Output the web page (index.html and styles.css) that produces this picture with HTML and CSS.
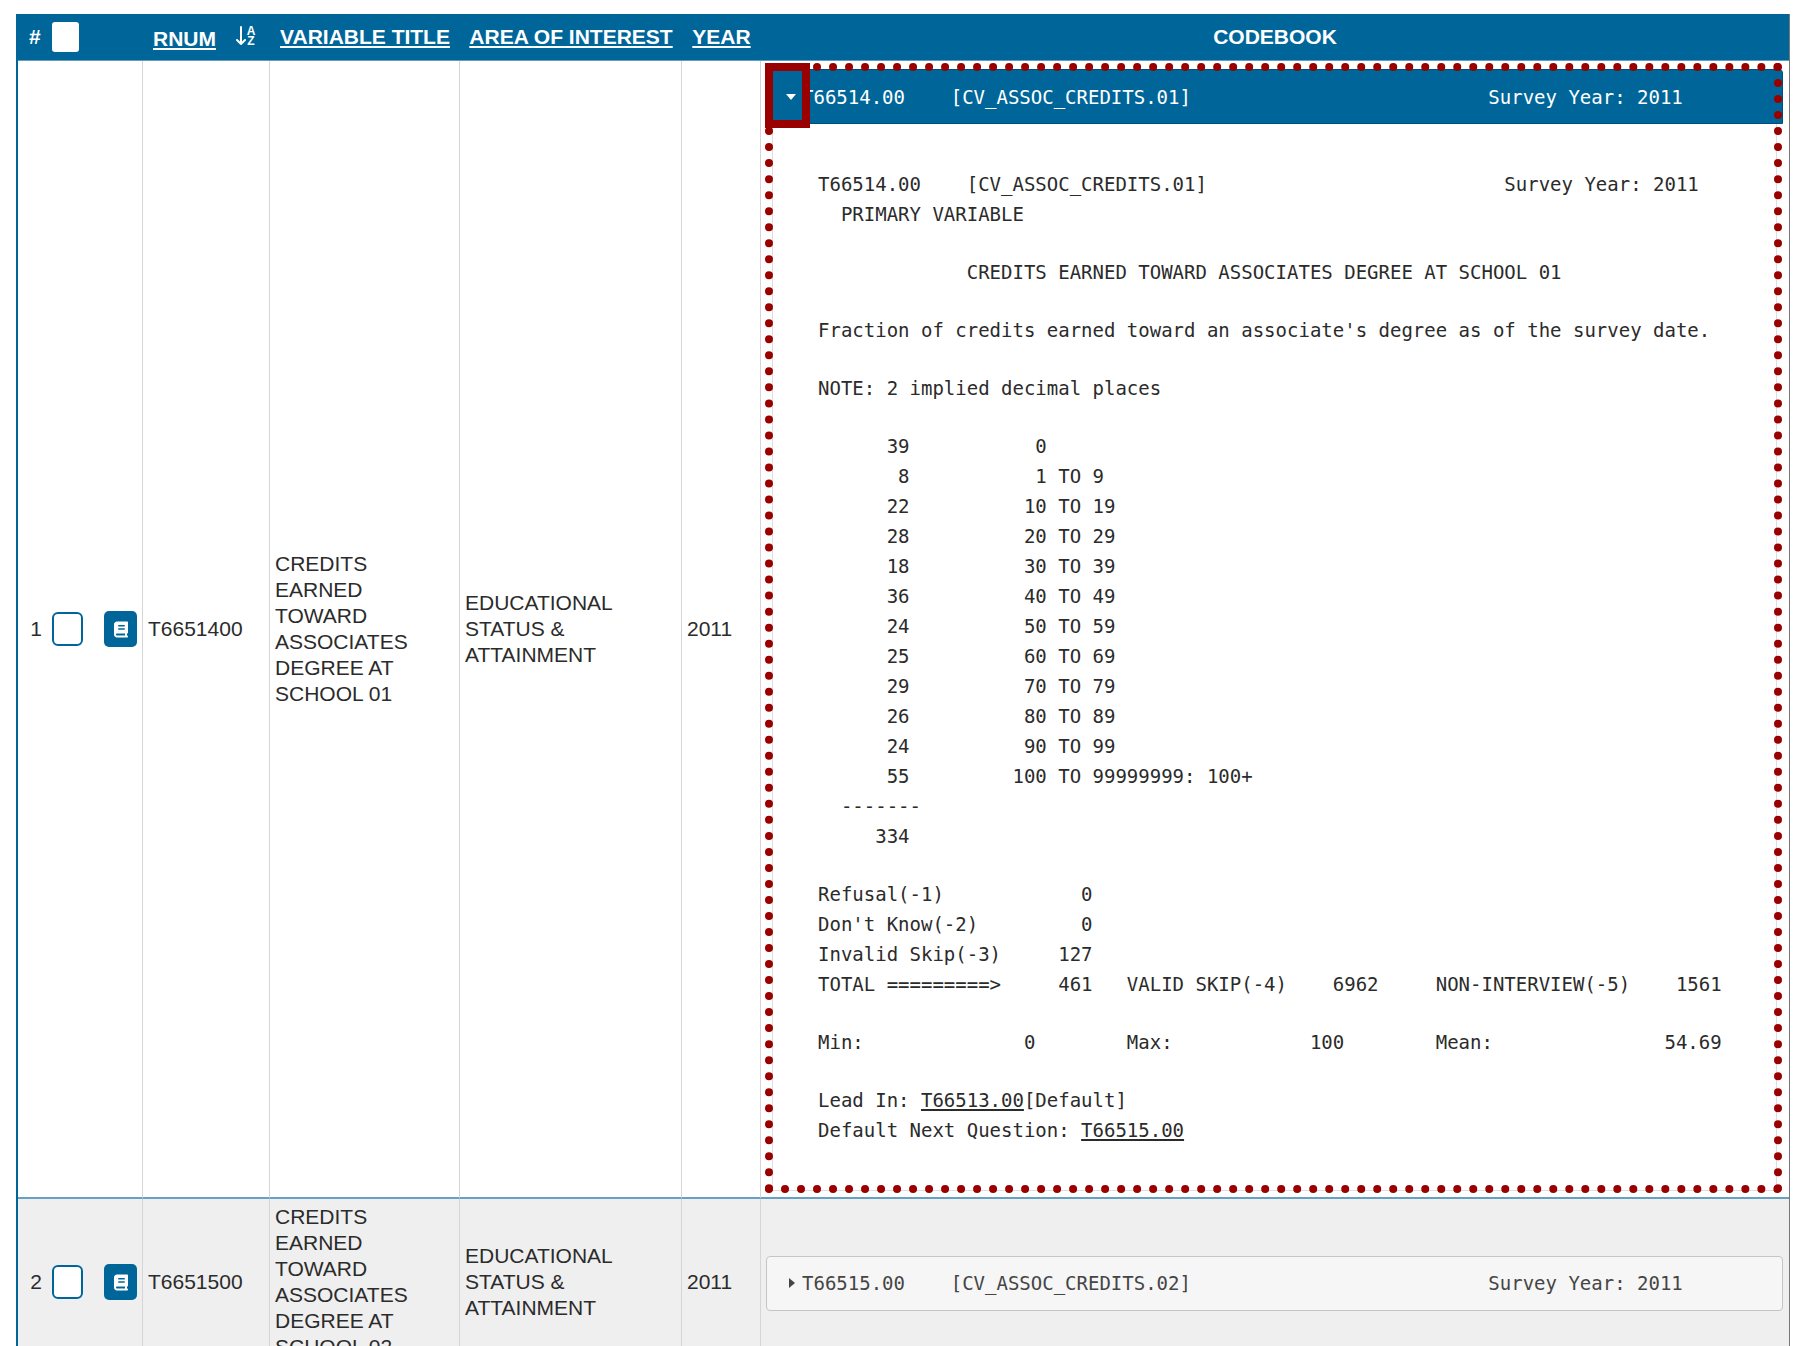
FILE: index.html
```html
<!DOCTYPE html>
<html lang="en">

<head>
    <meta charset="UTF-8">
    <meta name="viewport" content="width=device-width, initial-scale=1.0">
    <title>Variable Codebook</title>
    <link rel="stylesheet" href="styles.css">
</head>

<body>
    <table class="variables">
        <colgroup>
            <col class="col-select">
            <col class="col-rnum">
            <col class="col-title">
            <col class="col-area">
            <col class="col-year">
            <col>
        </colgroup>
        <thead>
            <tr>
                <th>
                    <div class="select-cell">
                        <span class="num">#</span>
                        <input type="checkbox" class="check-all" aria-label="Select all variables">
                    </div>
                </th>
                <th>
                    <div class="sort-cell">
                        <a href="#rnum">RNUM</a>
                        <svg class="sort-icon" viewBox="0 0 24 22" aria-hidden="true">
                            <path d="M5 1V18M1 14L5 18L9 14" fill="none" stroke="currentColor" stroke-width="2" stroke-linecap="round" stroke-linejoin="round" />
                            <text x="15" y="9" text-anchor="middle">A</text>
                            <text x="15" y="19" text-anchor="middle">Z</text>
                        </svg>
                    </div>
                </th>
                <th><a href="#title">VARIABLE TITLE</a></th>
                <th><a href="#area">AREA OF INTEREST</a></th>
                <th><a href="#year">YEAR</a></th>
                <th>CODEBOOK</th>
            </tr>
        </thead>
        <tbody>
            <tr>
                <td>
                    <div class="select-cell">
                        <label class="num" for="check1">1</label>
                        <input type="checkbox" id="check1">
                        <button class="book-btn" type="button" aria-label="Open codebook for T6651400">
                            <svg viewBox="0 0 448 512" aria-hidden="true"><path d="M96 0C43 0 0 43 0 96V416c0 53 43 96 96 96H384h32c18 0 32-14 32-32s-14-32-32-32V384c18 0 32-14 32-32V32c0-18-14-32-32-32H384 96zm0 384H352v64H96c-18 0-32-14-32-32s14-32 32-32zm32-248c0-13 11-24 24-24H328c13 0 24 11 24 24s-11 24-24 24H152c-13 0-24-11-24-24zm24 80H328c13 0 24 11 24 24s-11 24-24 24H152c-13 0-24-11-24-24s11-24 24-24z" /></svg>
                        </button>
                    </div>
                </td>
                <td>T6651400</td>
                <td>CREDITS EARNED TOWARD ASSOCIATES DEGREE AT SCHOOL 01</td>
                <td>EDUCATIONAL STATUS &amp; ATTAINMENT</td>
                <td>2011</td>
                <td class="codebook">
                    <details class="entry" open>
                        <summary>
                            <svg class="marker" viewBox="0 0 10 12" aria-hidden="true"><path d="M0 3H10L5 9Z" /></svg>
                            <span>T66514.00    [CV_ASSOC_CREDITS.01]                          Survey Year: 2011</span>
                        </summary>
                        <div class="entry-body">
<pre>T66514.00    [CV_ASSOC_CREDITS.01]                          Survey Year: 2011
  PRIMARY VARIABLE</pre>
<pre>             CREDITS EARNED TOWARD ASSOCIATES DEGREE AT SCHOOL 01</pre>
<pre>Fraction of credits earned toward an associate's degree as of the survey date.</pre>
<pre>NOTE: 2 implied decimal places</pre>
<pre>      39           0
       8           1 TO 9
      22          10 TO 19
      28          20 TO 29
      18          30 TO 39
      36          40 TO 49
      24          50 TO 59
      25          60 TO 69
      29          70 TO 79
      26          80 TO 89
      24          90 TO 99
      55         100 TO 99999999: 100+
  -------
     334</pre>
<pre>Refusal(-1)            0
Don't Know(-2)         0
Invalid Skip(-3)     127
TOTAL =========&gt;     461   VALID SKIP(-4)    6962     NON-INTERVIEW(-5)    1561</pre>
<pre>Min:              0        Max:            100        Mean:               54.69</pre>
<pre>Lead In: <a href="#T66513.00">T66513.00</a>[Default]
Default Next Question: <a href="#T66515.00">T66515.00</a></pre>
                        </div>
                    </details>
                    <!-- callouts over the open entry -->
                    <div class="outline"></div>
                    <div class="highlight"></div>
                </td>
            </tr>
            <tr>
                <td>
                    <div class="select-cell">
                        <label class="num" for="check2">2</label>
                        <input type="checkbox" id="check2">
                        <button class="book-btn" type="button" aria-label="Open codebook for T6651500">
                            <svg viewBox="0 0 448 512" aria-hidden="true"><path d="M96 0C43 0 0 43 0 96V416c0 53 43 96 96 96H384h32c18 0 32-14 32-32s-14-32-32-32V384c18 0 32-14 32-32V32c0-18-14-32-32-32H384 96zm0 384H352v64H96c-18 0-32-14-32-32s14-32 32-32zm32-248c0-13 11-24 24-24H328c13 0 24 11 24 24s-11 24-24 24H152c-13 0-24-11-24-24zm24 80H328c13 0 24 11 24 24s-11 24-24 24H152c-13 0-24-11-24-24s11-24 24-24z" /></svg>
                        </button>
                    </div>
                </td>
                <td>T6651500</td>
                <td>CREDITS EARNED TOWARD ASSOCIATES DEGREE AT SCHOOL 02</td>
                <td>EDUCATIONAL STATUS &amp; ATTAINMENT</td>
                <td>2011</td>
                <td class="codebook">
                    <details class="entry">
                        <summary>
                            <svg class="marker" viewBox="0 0 10 12" aria-hidden="true"><path d="M3 1V11L9 6Z" /></svg>
                            <span>T66515.00    [CV_ASSOC_CREDITS.02]                          Survey Year: 2011</span>
                        </summary>
                    </details>
                </td>
            </tr>
        </tbody>
    </table>
</body>

</html>
```

FILE: styles.css
```css
* {
    box-sizing: border-box;
}

body {
    font-family: "Liberation Sans", Arial, sans-serif;
    font-size: 21px;
    line-height: 26px;
    color: #2b2b2b;
    background-color: #fff;
    margin: 0;
    padding: 14px 18px 0 16px;
    height: 100vh;
    overflow: hidden;
}

a {
    color: inherit;
    text-decoration-thickness: 2px;
    text-underline-offset: 2px;
}

.variables {
    width: 100%;
    table-layout: fixed;
    border-collapse: separate;
    border-spacing: 0;
    border-left: 2px solid #069;
    border-right: 1px solid #777;
}

.col-select {
    width: 125px;
}

.col-rnum {
    width: 127px;
}

.col-title {
    width: 190px;
}

.col-area {
    width: 222px;
}

.col-year {
    width: 79px;
}

th {
    padding: 8px 0;
    background-color: #069;
    border-bottom: 1px solid #669cbd;
    color: #fff;
    font-weight: bold;
}

td {
    padding: 5px;
    border-right: 1px solid #d5d5d5;
    border-bottom: 2px solid #66a0c2;
    vertical-align: middle;
}

td:last-child {
    border-right: none;
}

tbody tr:nth-child(even) {
    background-color: #efefef;
}

/* number, checkbox and codebook button */
.select-cell {
    display: flex;
    align-items: center;
    padding-left: 6px;
}

th .select-cell {
    padding-left: 11px;
}

.num {
    width: 13px;
    margin-right: 10px;
    text-align: right;
}

th .num {
    text-align: left;
}

input[type="checkbox"] {
    appearance: none;
    flex: none;
    width: 31px;
    height: 34px;
    margin: 0 21px 0 0;
    background-color: #fff;
    border: 2px solid #069;
    border-radius: 6px;
}

input[type="checkbox"].check-all {
    width: 27px;
    height: 30px;
    margin: 0;
    border: none;
    border-radius: 3px;
}

input[type="checkbox"]:checked {
    background-color: #8cb8d0;
}

.book-btn {
    display: flex;
    align-items: center;
    justify-content: center;
    flex: none;
    width: 33px;
    height: 36px;
    padding: 0;
    background-color: #069;
    border: none;
    border-radius: 5px;
    cursor: pointer;
}

.book-btn svg {
    width: 14px;
    height: 17px;
    fill: #fff;
}

.sort-cell {
    display: flex;
    align-items: center;
    justify-content: center;
    gap: 20px;
    height: 30px;
}

.sort-cell a {
    align-self: flex-end;
}

.sort-icon {
    width: 24px;
    height: 22px;
}

.sort-icon text {
    font-size: 12px;
    font-weight: bold;
    fill: #fff;
}

/* codebook entries */
.codebook {
    position: relative;
    padding-right: 6px;
}

.entry {
    font-family: "DejaVu Sans Mono", Consolas, monospace;
    font-size: 19px;
    line-height: 30px;
    margin-top: 2px;
}

.entry summary {
    display: flex;
    align-items: center;
    gap: 6px;
    height: 55px;
    padding-left: 19px;
    background-color: #f6f6f6;
    border: 1px solid #c5c5c5;
    border-radius: 4px;
    color: #454545;
    white-space: pre;
    cursor: pointer;
}

.entry[open] {
    margin: 3px 0 1px;
}

.entry[open] summary {
    background-color: #069;
    border-color: #004d80;
    border-radius: 4px 4px 0 0;
    color: #fff;
}

.marker {
    width: 10px;
    height: 12px;
    fill: currentColor;
}

.entry-body {
    display: flex;
    flex-direction: column;
    gap: 28px;
    margin: 0 6px;
    padding: 45px 0 45px 45px;
    border: 1px solid #ddd;
    border-top: none;
}

.entry-body pre {
    font-family: inherit;
    margin: 0;
}

.outline {
    position: absolute;
    top: 2px;
    right: 7px;
    bottom: 4px;
    left: 4px;
    border: 8px dotted #900;
    pointer-events: none;
}

.highlight {
    position: absolute;
    top: 2px;
    left: 4px;
    width: 45px;
    height: 65px;
    border: 8px solid #900;
    pointer-events: none;
}
```
